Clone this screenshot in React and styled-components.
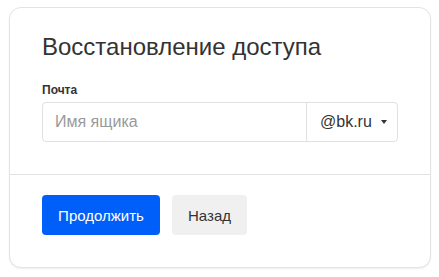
import React from "react";
import styled, { createGlobalStyle } from "styled-components";

const Global = createGlobalStyle`
  html, body { margin: 0; padding: 0; background: #fff; }
  body { font-family: Arial, "Liberation Sans", sans-serif; color: #333; }
  * { box-sizing: border-box; }
`;

const Page = styled.div`
  padding: 7px 8px 9px 9px;
`;

const Card = styled.div`
  width: 422px;
  border: 1px solid #e3e3e3;
  border-radius: 12px;
  box-shadow: 0 1px 2px rgba(0, 0, 0, 0.07);
  background: #fff;
`;

const Body = styled.div`
  padding: 25px 32px 32px 32px;
  border-bottom: 1px solid #e3e3e3;
`;

const Title = styled.h1`
  margin: 0;
  font-size: 24px;
  line-height: 28px;
  font-weight: 400;
  color: #333;
`;

const Label = styled.div`
  margin-top: 21px;
  font-size: 12px;
  line-height: 16px;
  font-weight: 700;
  color: #333;
`;

const Field = styled.div`
  margin-top: 4px;
  display: flex;
  height: 40px;
  width: 356px;
  border: 1px solid #e0e0e0;
  border-radius: 4px;
`;

const Input = styled.input`
  flex: 1;
  min-width: 0;
  border: none;
  outline: none;
  background: transparent;
  padding: 0 12px;
  font-family: Arial, "Liberation Sans", sans-serif;
  font-size: 16px;
  color: #333;
  &::placeholder { color: #999; }
`;

const Domain = styled.div`
  width: 91px;
  border-left: 1px solid #e0e0e0;
  display: flex;
  align-items: center;
  padding: 0 0 0 13px;
  font-size: 16px;
  color: #333;
`;

const DomainText = styled.span`
  flex: 1;
`;

const Arrow = styled.span`
  width: 0;
  height: 0;
  border-left: 3.5px solid transparent;
  border-right: 3.5px solid transparent;
  border-top: 4px solid #333;
  margin-right: 10px;
`;

const Footer = styled.div`
  padding: 20px 32px 32px 32px;
  display: flex;
  gap: 12px;
`;

const Button = styled.button`
  height: 40px;
  padding: 0 16px;
  border: none;
  border-radius: 4px;
  font-family: Arial, "Liberation Sans", sans-serif;
  font-size: 15px;
  cursor: pointer;
  background: ${(p) => (p.$primary ? "#005ff9" : "#f0f0f0")};
  color: ${(p) => (p.$primary ? "#fff" : "#333")};
  width: ${(p) => p.$w}px;
`;

export default function App() {
  return (
    <>
      <Global />
      <Page>
        <Card>
          <Body>
            <Title>Восстановление доступа</Title>
            <Label>Почта</Label>
            <Field>
              <Input placeholder="Имя ящика" />
              <Domain>
                <DomainText>@bk.ru</DomainText>
                <Arrow />
              </Domain>
            </Field>
          </Body>
          <Footer>
            <Button $primary $w={118}>Продолжить</Button>
            <Button $w={75}>Назад</Button>
          </Footer>
        </Card>
      </Page>
    </>
  );
}
